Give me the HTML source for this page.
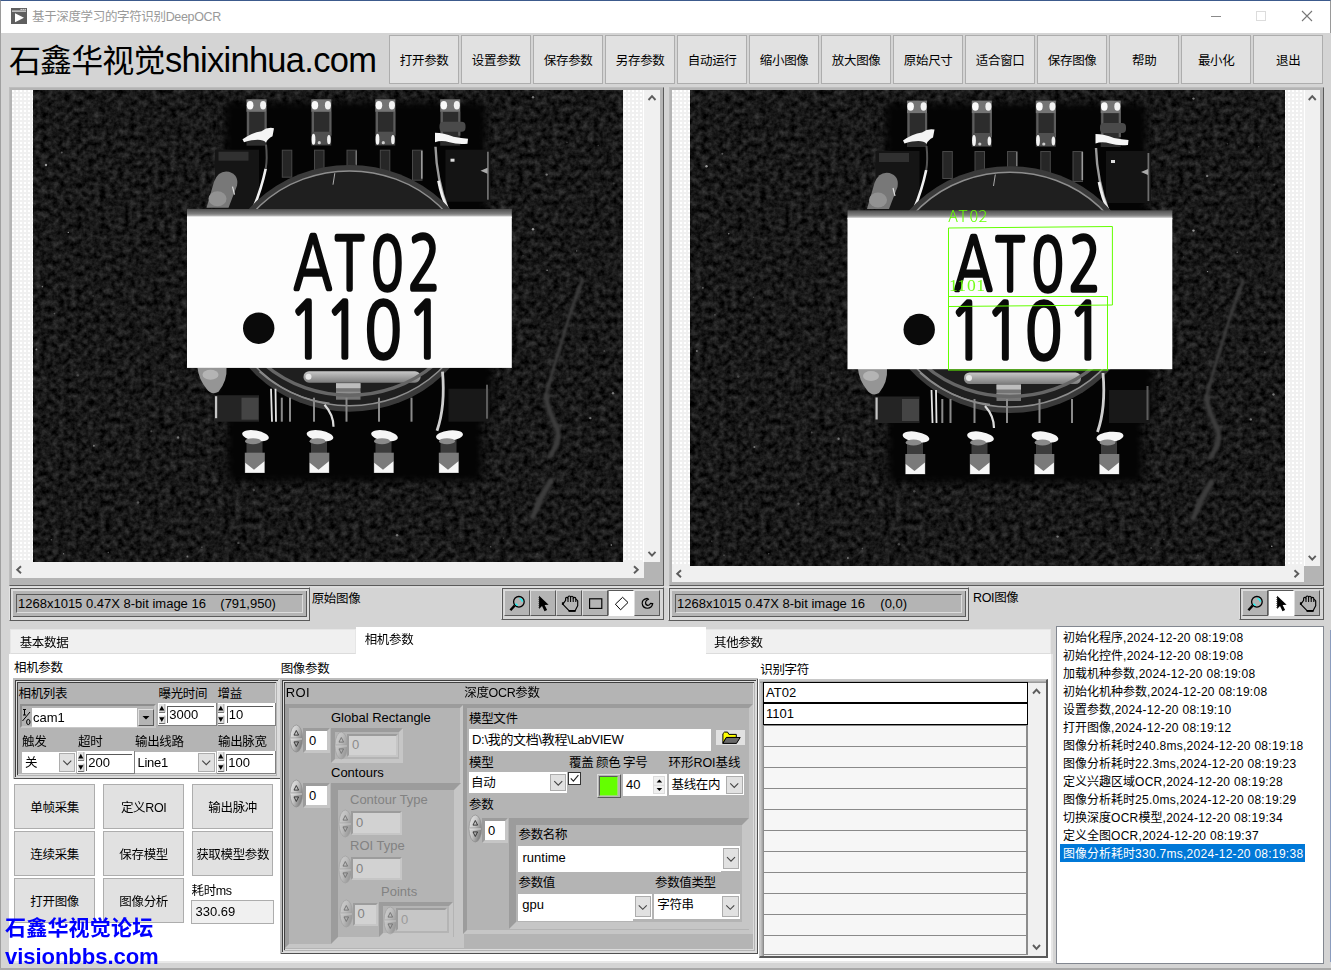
<!DOCTYPE html>
<html lang="zh"><head><meta charset="utf-8"><title>DeepOCR</title>
<style>
*{box-sizing:border-box;margin:0;padding:0}
html,body{width:1331px;height:970px;overflow:hidden;background:#d4d4d4}
body{position:relative;font-family:"Liberation Sans","Noto Sans CJK SC",sans-serif;font-size:12px;color:#000;line-height:1}
.a{position:absolute}
.t{position:absolute;white-space:nowrap;line-height:16px}
svg{position:absolute;display:block;overflow:hidden}
.tb{position:absolute;top:35px;width:70px;height:49px;background:#e1e1e1;border:1px solid #adadad;text-align:center;line-height:50px;font-size:12.5px;letter-spacing:-.35px;text-indent:.35px}
.btn{position:absolute;width:81px;height:45px;background:#e1e1e1;border:1px solid #adadad;text-align:center;line-height:47px;font-size:12.5px;letter-spacing:-.35px;text-indent:.35px;white-space:nowrap}
.dots{background-color:#f0f0f0;background-image:radial-gradient(circle at 1px 1px,#fff 0.9px,rgba(255,255,255,0) 1.3px);background-size:4px 4px}
.sb{background:#f0f0f0}
.cl{background:#b4b4b4}
.w{background:#fff}
.dd{position:absolute;background:#e1e1e1;border:1px solid #adadad}
.g{color:#828282}
.ls{letter-spacing:.28px}
</style></head><body>
<div class="a" style="left:0;top:0;width:1331px;height:33px;background:#fff;border-top:1px solid #3c5a8c;border-left:1px solid #9a9a9a;border-right:1px solid #9a9a9a"></div>
<div class="a" style="left:0;top:33px;width:1px;height:937px;background:#a0a0a0"></div>
<svg style="left:11px;top:8px" width="16" height="16" viewBox="0 0 16 16"><rect width="16" height="16" fill="#5f5f5f"/><rect x="1" y="2.6" width="14" height="1" fill="#fff"/><rect x="9.6" y="0.9" width="1.1" height="1.1" fill="#fff"/><rect x="11.6" y="0.9" width="1.1" height="1.1" fill="#fff"/><rect x="13.6" y="0.9" width="1.1" height="1.1" fill="#fff"/><path d="M4 5.2 L13 9.7 L4 14.2 Z" fill="#fff"/></svg>
<div class="t" style="left:32px;top:8.8px;font-size:12.5px;letter-spacing:-.35px;color:#999">基于深度学习的字符识别DeepOCR</div>
<svg style="left:1200px;top:5px" width="125" height="24" viewBox="1200 5 125 24"><path d="M1211 16.5H1221" stroke="#8a8a8a" stroke-width="1"/><rect x="1256.5" y="11.5" width="9" height="9" fill="none" stroke="#dcdcdc" stroke-width="1"/><path d="M1302 11 L1312 21 M1312 11 L1302 21" stroke="#777" stroke-width="1.1"/></svg>
<div class="t" style="left:9px;top:38.5px;font-size:32px;line-height:42px;letter-spacing:-.9px">石鑫华视觉<span style="font-size:34.5px;letter-spacing:-.72px;margin-left:.5px">shixinhua.com</span></div>
<div class="tb" style="left:389px">打开参数</div>
<div class="tb" style="left:461px">设置参数</div>
<div class="tb" style="left:533px">保存参数</div>
<div class="tb" style="left:605px">另存参数</div>
<div class="tb" style="left:677px">自动运行</div>
<div class="tb" style="left:749px">缩小图像</div>
<div class="tb" style="left:821px">放大图像</div>
<div class="tb" style="left:893px">原始尺寸</div>
<div class="tb" style="left:965px">适合窗口</div>
<div class="tb" style="left:1037px">保存图像</div>
<div class="tb" style="left:1109px">帮助</div>
<div class="tb" style="left:1181px">最小化</div>
<div class="tb" style="left:1253px">退出</div>
<div class="a" style="left:9px;top:87px;width:655px;height:499px;background:#b4b4b4;border-right:1px solid #5a5a5a;border-bottom:1px solid #5a5a5a;border-top:1px solid #bdbdbd;border-left:1px solid #bdbdbd"></div>
<div class="a dots" style="left:12px;top:90px;width:632px;height:472px;"></div>
<div class="a" style="left:643px;top:90px;width:1px;height:472px;background:#fff"></div>
<div class="a sb" style="left:644px;top:90px;width:16px;height:472px;"></div>
<div class="a sb" style="left:12px;top:562px;width:631.5px;height:16px;"></div>
<svg style="left:33px;top:90px" width="590" height="472" viewBox="3.5 1.3 590 472"><defs><filter id="nz1" x="0" y="0" width="100%" height="100%" color-interpolation-filters="sRGB"><feTurbulence type="fractalNoise" baseFrequency="0.17" numOctaves="3" seed="11"/><feColorMatrix type="matrix" values="0.32 0 0 0 -0.065  0.32 0 0 0 -0.065  0.32 0 0 0 -0.065  0 0 0 0 1"/></filter><filter id="bl1" x="-20%" y="-20%" width="140%" height="140%" color-interpolation-filters="sRGB"><feGaussianBlur stdDeviation="3.5"/></filter><filter id="b11" x="-20%" y="-20%" width="140%" height="140%" color-interpolation-filters="sRGB"><feGaussianBlur stdDeviation="0.75"/></filter><filter id="b21" x="-20%" y="-20%" width="140%" height="140%" color-interpolation-filters="sRGB"><feGaussianBlur stdDeviation="1.3"/></filter><linearGradient id="lg1" x1="0" y1="0" x2="0" y2="1"><stop offset="0" stop-color="#4e4e4e"/><stop offset="0.55" stop-color="#808080"/><stop offset="1" stop-color="#ececec"/></linearGradient><linearGradient id="wg1" x1="0" y1="0" x2="0" y2="1"><stop offset="0" stop-color="#c8c8c8"/><stop offset="1" stop-color="#7c7c7c"/></linearGradient></defs><rect x="-5" y="-5" width="606" height="487" fill="#191919"/><rect x="-5" y="-5" width="606" height="487" filter="url(#nz1)"/><g filter="url(#b11)"><circle cx="473.9" cy="449.5" r="0.7" fill="#3c3c3c"/><circle cx="30.9" cy="74.8" r="1.0" fill="#3c3c3c"/><circle cx="517.6" cy="181.6" r="0.7" fill="#999"/><circle cx="148.6" cy="348.8" r="1.2" fill="#777"/><circle cx="108.5" cy="413.8" r="1.2" fill="#5a5a5a"/><circle cx="78.8" cy="463.8" r="0.7" fill="#5a5a5a"/><circle cx="461.1" cy="458.0" r="0.8" fill="#5a5a5a"/><circle cx="172.4" cy="458.6" r="0.8" fill="#5a5a5a"/><circle cx="560.8" cy="329.4" r="1.2" fill="#777"/><circle cx="12.9" cy="197.9" r="0.8" fill="#777"/><circle cx="38.8" cy="143.7" r="0.7" fill="#999"/><circle cx="34.0" cy="465.1" r="0.7" fill="#777"/><circle cx="503.5" cy="8.6" r="1.2" fill="#777"/><circle cx="224.3" cy="401.3" r="1.2" fill="#4a4a4a"/><circle cx="568.8" cy="56.8" r="0.8" fill="#3c3c3c"/><circle cx="64.4" cy="357.0" r="1.0" fill="#777"/><circle cx="21.8" cy="451.1" r="0.7" fill="#5a5a5a"/><circle cx="547.2" cy="162.2" r="0.7" fill="#777"/><circle cx="48.3" cy="286.5" r="1.2" fill="#4a4a4a"/><circle cx="141.5" cy="283.3" r="1.0" fill="#3c3c3c"/><circle cx="583.5" cy="304.5" r="1.2" fill="#777"/><circle cx="499.7" cy="62.3" r="0.8" fill="#3c3c3c"/><circle cx="63.6" cy="207.3" r="0.8" fill="#4a4a4a"/><circle cx="503.5" cy="140.6" r="1.2" fill="#999"/><circle cx="507.9" cy="465.6" r="1.2" fill="#3c3c3c"/><circle cx="537.5" cy="53.7" r="0.8" fill="#3c3c3c"/><circle cx="517.2" cy="85.9" r="1.2" fill="#777"/><circle cx="157.9" cy="467.9" r="1.0" fill="#777"/><circle cx="6.9" cy="260.9" r="1.0" fill="#777"/><circle cx="493.6" cy="167.0" r="0.8" fill="#3c3c3c"/><circle cx="581.8" cy="456.3" r="0.8" fill="#999"/><circle cx="584.2" cy="94.8" r="1.0" fill="#3c3c3c"/><circle cx="367.6" cy="446.6" r="1.2" fill="#777"/><circle cx="16.5" cy="76.3" r="1.2" fill="#999"/><circle cx="24.9" cy="224.9" r="0.8" fill="#5a5a5a"/><circle cx="32.3" cy="63.7" r="1.0" fill="#5a5a5a"/><circle cx="121.8" cy="342.5" r="1.0" fill="#4a4a4a"/><circle cx="208.9" cy="454.2" r="1.2" fill="#4a4a4a"/><circle cx="574.8" cy="262.3" r="1.0" fill="#4a4a4a"/></g><path d="M196 14 H456 V122 H462 V330 H452 V392 H198 V330 H186 V122 H196 Z" fill="#040404" filter="url(#bl1)"/><g filter="url(#b21)" fill="none" stroke="#3d3d3d" stroke-linecap="round" stroke-linejoin="round"><path d="M552.8 191 Q540 225 533 250 Q522 285 516.5 306" stroke-width="3.2"/><path d="M516.5 306 Q518 322 528 340 Q531 352 521.5 366" stroke-width="5"/><path d="M521.5 392 L512 408 L503.3 428" stroke-width="5.5"/></g><g filter="url(#b11)"><rect x="185.5" y="61" width="44" height="60" fill="#151515"/><rect x="189" y="63" width="30" height="9" fill="#303030"/><rect x="416" y="61" width="45" height="52" fill="#141414"/><rect x="457.5" y="63" width="1.8" height="48" fill="#6e6e6e"/><rect x="421" y="70" width="4" height="3" fill="#ddd"/><path d="M451 82 L458 79 V85 Z" fill="#aaa"/><rect x="252.8" y="61.5" width="9.5" height="27" fill="#262626" stroke="#484848" stroke-width="1"/><rect x="285" y="61.5" width="9.5" height="22" fill="#262626" stroke="#484848" stroke-width="1"/><rect x="317.5" y="61.5" width="9.5" height="20" fill="#262626" stroke="#484848" stroke-width="1"/><rect x="350.8" y="61.5" width="9.5" height="22" fill="#262626" stroke="#484848" stroke-width="1"/><rect x="383" y="61.5" width="9.5" height="30" fill="#262626" stroke="#484848" stroke-width="1"/><rect x="391.5" y="62" width="1.6" height="28" fill="#9a9a9a"/><rect x="326" y="62" width="1.4" height="14" fill="#777"/><rect x="217" y="11" width="20" height="46" fill="#2c2c2c"/><rect x="217.5" y="23" width="2.2" height="24" fill="#5c5c5c"/><rect x="235" y="23" width="2.2" height="24" fill="#5c5c5c"/><rect x="217" y="10.6" width="20" height="12.5" fill="#747474"/><ellipse cx="220.6" cy="16.5" rx="3.3" ry="4.2" fill="#fafafa"/><ellipse cx="233.6" cy="16.5" rx="3" ry="4.2" fill="#f2f2f2"/><rect x="281.8" y="11" width="20" height="46" fill="#2c2c2c"/><rect x="282.3" y="23" width="2.2" height="24" fill="#5c5c5c"/><rect x="299.8" y="23" width="2.2" height="24" fill="#5c5c5c"/><rect x="281.8" y="10.6" width="20" height="12.5" fill="#747474"/><ellipse cx="285.4" cy="16.5" rx="3.3" ry="4.2" fill="#fafafa"/><ellipse cx="298.4" cy="16.5" rx="3" ry="4.2" fill="#f2f2f2"/><rect x="282.3" y="43" width="19" height="13" fill="#505050"/><ellipse cx="284" cy="50.5" rx="1.9" ry="5.5" fill="#f4f4f4"/><ellipse cx="299.4" cy="51" rx="1.8" ry="4.6" fill="#f0f0f0"/><circle cx="289.8" cy="54" r="1.6" fill="#ccc"/><rect x="345.8" y="11" width="20" height="46" fill="#2c2c2c"/><rect x="346.3" y="23" width="2.2" height="24" fill="#5c5c5c"/><rect x="363.8" y="23" width="2.2" height="24" fill="#5c5c5c"/><rect x="345.8" y="10.6" width="20" height="12.5" fill="#747474"/><ellipse cx="349.4" cy="16.5" rx="3.3" ry="4.2" fill="#fafafa"/><ellipse cx="362.4" cy="16.5" rx="3" ry="4.2" fill="#f2f2f2"/><rect x="346.3" y="43" width="19" height="13" fill="#505050"/><ellipse cx="348" cy="50.5" rx="1.9" ry="5.5" fill="#f4f4f4"/><ellipse cx="363.4" cy="51" rx="1.8" ry="4.6" fill="#f0f0f0"/><circle cx="353.8" cy="54" r="1.6" fill="#ccc"/><rect x="410.7" y="11" width="20" height="46" fill="#2c2c2c"/><rect x="411.2" y="23" width="2.2" height="24" fill="#5c5c5c"/><rect x="428.7" y="23" width="2.2" height="24" fill="#5c5c5c"/><rect x="410.7" y="10.6" width="20" height="12.5" fill="#747474"/><ellipse cx="414.3" cy="16.5" rx="3.3" ry="4.2" fill="#fafafa"/><ellipse cx="427.3" cy="16.5" rx="3" ry="4.2" fill="#f2f2f2"/><path d="M213 50.5 Q222 44 232 42.5 Q238 38 244.5 39.5 L243 47.5 Q238 50 236.5 54 Q232 48.5 214.5 53.5 Z" fill="#f4f4f4"/><path d="M236.2 80 Q232 100 224 119" fill="none" stroke="#f0f0f0" stroke-width="2.6"/><path d="M236.5 56 Q238 70 236.2 80" fill="none" stroke="#555" stroke-width="2"/><rect x="410" y="33" width="26" height="10" rx="4" fill="#4a4a4a"/><path d="M405.5 44 Q414 44 424 48 Q432 49.5 438.5 50 L438 55 Q428 56 420 53.5 Q412 51 405.5 53.5 Z" fill="#f6f6f6"/><path d="M406 58 Q407 90 418.5 121" fill="none" stroke="#9a9a9a" stroke-width="2.4"/><path d="M409 92 Q412 108 418.5 121" fill="none" stroke="#eee" stroke-width="2.8"/><path d="M177 119 L184.5 93 Q189 81 199.5 83 Q209.5 86 207.5 97 L199 119 Z" fill="#787878"/><ellipse cx="188" cy="110" rx="9" ry="7.5" fill="#929292"/><path d="M203 98 L205 106" stroke="#ddd" stroke-width="1.2"/><ellipse cx="320" cy="199.6" rx="131.5" ry="123.4" fill="#3a3a3a"/><ellipse cx="320" cy="199.6" rx="126" ry="117.4" fill="#1f1f1f" stroke="#8e8e8e" stroke-width="1.5"/><path d="M305.3 84.5 L303.5 96" stroke="#bbb" stroke-width="0.9"/><path d="M168 279 H197 Q198 292 189 303 Q182 307 177 300 Q169 290 168 279 Z" fill="#959595"/><ellipse cx="181" cy="286" rx="8" ry="5" fill="#b4b4b4"/><rect x="274" y="282.5" width="117" height="11.5" rx="5.5" fill="url(#wg1)"/><ellipse cx="279" cy="288" rx="3" ry="3" fill="#e8e8e8"/><rect x="306.5" y="294.5" width="24.5" height="16.5" fill="#747474"/><rect x="306.5" y="294.5" width="24.5" height="5" fill="#bdbdbd"/><rect x="306.5" y="303" width="24.5" height="2" fill="#909090"/><path d="M194.5 199.6 A126 117.4 0 0 0 445.5 199.6" fill="none" stroke="#666" stroke-width="3.4"/><path d="M230 283 A126 116 0 0 0 300 314.5" fill="none" stroke="#8a8a8a" stroke-width="1.4"/><rect x="184.5" y="306.5" width="45" height="26.5" fill="#242424"/><rect x="212" y="309" width="17" height="22" fill="#444"/><rect x="185.5" y="307.5" width="2.2" height="22" fill="#c4c4c4"/><rect x="419" y="300" width="41" height="33" fill="#181818"/><rect x="456.5" y="296" width="2" height="34" fill="#5c5c5c"/><rect x="251.3" y="309" width="2" height="24" fill="#8a8a8a"/><rect x="259.5" y="309" width="2" height="24" fill="#8a8a8a"/><rect x="283.5" y="309" width="2" height="24" fill="#8a8a8a"/><rect x="316" y="309" width="2" height="24" fill="#8a8a8a"/><rect x="348.5" y="309" width="2" height="24" fill="#8a8a8a"/><rect x="381" y="309" width="2" height="24" fill="#8a8a8a"/><path d="M241.5 300 L242.5 333 M246 300 L246.5 333" fill="none" stroke="#e4e4e4" stroke-width="1.8"/><path d="M295 316 Q304 326 304 338" fill="none" stroke="#ddd" stroke-width="2.2"/><path d="M413 283 Q416 318 407.5 342" fill="none" stroke="#cfcfcf" stroke-width="2.8"/><rect x="217" y="350" width="16" height="22" fill="#3c3c3c"/><ellipse cx="226" cy="347" rx="13.5" ry="5.2" fill="#f6f6f6" transform="rotate(10 226 347)"/><ellipse cx="223.5" cy="352.5" rx="8" ry="3" fill="#8a8a8a"/><rect x="215.3" y="364" width="20" height="20.3" fill="#7a7a7a"/><path d="M215.7 384 V374 L224.5 381 L234.9 372.5 V384 Z" fill="#f6f6f6"/><rect x="281.5" y="350" width="16" height="22" fill="#3c3c3c"/><ellipse cx="290.5" cy="347" rx="13.5" ry="5.2" fill="#f6f6f6" transform="rotate(10 290.5 347)"/><ellipse cx="288" cy="352.5" rx="8" ry="3" fill="#8a8a8a"/><rect x="279.8" y="364" width="20" height="20.3" fill="#7a7a7a"/><path d="M280.2 384 V374 L289 381 L299.4 372.5 V384 Z" fill="#f6f6f6"/><rect x="346" y="350" width="16" height="22" fill="#3c3c3c"/><ellipse cx="355" cy="347" rx="13.5" ry="5.2" fill="#f6f6f6" transform="rotate(10 355 347)"/><ellipse cx="352.5" cy="352.5" rx="8" ry="3" fill="#8a8a8a"/><rect x="344.3" y="364" width="20" height="20.3" fill="#7a7a7a"/><path d="M344.7 384 V374 L353.5 381 L363.9 372.5 V384 Z" fill="#f6f6f6"/><rect x="411" y="350" width="16" height="22" fill="#3c3c3c"/><ellipse cx="420" cy="347" rx="13.5" ry="5.2" fill="#f6f6f6" transform="rotate(-6 420 347)"/><ellipse cx="417.5" cy="352.5" rx="8" ry="3" fill="#8a8a8a"/><rect x="409.3" y="364" width="20" height="20.3" fill="#7a7a7a"/><path d="M409.7 384 V374 L418.5 381 L428.9 372.5 V384 Z" fill="#f6f6f6"/><rect x="157.5" y="120.3" width="324.8" height="9" fill="url(#lg1)"/><rect x="157.5" y="127.8" width="324.8" height="151.4" fill="#fdfdfd"/><circle cx="229.2" cy="239.5" r="15.7" fill="#0a0a0a"/><text transform="translate(263.7 201.4) scale(0.72 1)" x="0 57.6 108.1 159.4" font-family="NanumGothic, Liberation Sans, sans-serif" font-size="74.5" fill="#0a0a0a" stroke="#0a0a0a" stroke-width="3.4" stroke-linejoin="round">AT02</text><text transform="translate(258.3 269) scale(0.8 1)" x="0 45.6 95.9 148.6" font-family="NanumGothic, Liberation Sans, sans-serif" font-size="77" fill="#0a0a0a" stroke="#0a0a0a" stroke-width="3.4" stroke-linejoin="round">1101</text></g></svg>
<svg style="left:9px;top:87px" width="655" height="499" viewBox="9 87 655 499"><path d="M648.5 100 L652 96.2 L655.5 100" fill="none" stroke="#5c5c5c" stroke-width="1.9"/><path d="M648.5 551.8 L652 555.6 L655.5 551.8" fill="none" stroke="#5c5c5c" stroke-width="1.9"/><path d="M21 566.2 L17.2 569.7 L21 573.2" fill="none" stroke="#5c5c5c" stroke-width="1.9"/><path d="M634 566.2 L637.8 569.7 L634 573.2" fill="none" stroke="#5c5c5c" stroke-width="1.9"/></svg>
<div class="a" style="left:669px;top:87px;width:655px;height:499px;background:#b4b4b4;border-right:1px solid #5a5a5a;border-bottom:1px solid #5a5a5a;border-top:1px solid #bdbdbd;border-left:1px solid #bdbdbd"></div>
<div class="a dots" style="left:672px;top:90px;width:632.5px;height:476px;"></div>
<div class="a" style="left:1303.5px;top:90px;width:1px;height:476px;background:#fff"></div>
<div class="a sb" style="left:1304.5px;top:90px;width:15.5px;height:476px;"></div>
<div class="a sb" style="left:672px;top:566px;width:632px;height:16px;"></div>
<svg style="left:690px;top:90px" width="595" height="476" viewBox="0 0 595 476"><defs><filter id="nz2" x="0" y="0" width="100%" height="100%" color-interpolation-filters="sRGB"><feTurbulence type="fractalNoise" baseFrequency="0.17" numOctaves="3" seed="11"/><feColorMatrix type="matrix" values="0.32 0 0 0 -0.065  0.32 0 0 0 -0.065  0.32 0 0 0 -0.065  0 0 0 0 1"/></filter><filter id="bl2" x="-20%" y="-20%" width="140%" height="140%" color-interpolation-filters="sRGB"><feGaussianBlur stdDeviation="3.5"/></filter><filter id="b12" x="-20%" y="-20%" width="140%" height="140%" color-interpolation-filters="sRGB"><feGaussianBlur stdDeviation="0.75"/></filter><filter id="b22" x="-20%" y="-20%" width="140%" height="140%" color-interpolation-filters="sRGB"><feGaussianBlur stdDeviation="1.3"/></filter><linearGradient id="lg2" x1="0" y1="0" x2="0" y2="1"><stop offset="0" stop-color="#4e4e4e"/><stop offset="0.55" stop-color="#808080"/><stop offset="1" stop-color="#ececec"/></linearGradient><linearGradient id="wg2" x1="0" y1="0" x2="0" y2="1"><stop offset="0" stop-color="#c8c8c8"/><stop offset="1" stop-color="#7c7c7c"/></linearGradient></defs><rect x="-5" y="-5" width="606" height="487" fill="#191919"/><rect x="-5" y="-5" width="606" height="487" filter="url(#nz2)"/><g filter="url(#b12)"><circle cx="473.9" cy="449.5" r="0.7" fill="#3c3c3c"/><circle cx="30.9" cy="74.8" r="1.0" fill="#3c3c3c"/><circle cx="517.6" cy="181.6" r="0.7" fill="#999"/><circle cx="148.6" cy="348.8" r="1.2" fill="#777"/><circle cx="108.5" cy="413.8" r="1.2" fill="#5a5a5a"/><circle cx="78.8" cy="463.8" r="0.7" fill="#5a5a5a"/><circle cx="461.1" cy="458.0" r="0.8" fill="#5a5a5a"/><circle cx="172.4" cy="458.6" r="0.8" fill="#5a5a5a"/><circle cx="560.8" cy="329.4" r="1.2" fill="#777"/><circle cx="12.9" cy="197.9" r="0.8" fill="#777"/><circle cx="38.8" cy="143.7" r="0.7" fill="#999"/><circle cx="34.0" cy="465.1" r="0.7" fill="#777"/><circle cx="503.5" cy="8.6" r="1.2" fill="#777"/><circle cx="224.3" cy="401.3" r="1.2" fill="#4a4a4a"/><circle cx="568.8" cy="56.8" r="0.8" fill="#3c3c3c"/><circle cx="64.4" cy="357.0" r="1.0" fill="#777"/><circle cx="21.8" cy="451.1" r="0.7" fill="#5a5a5a"/><circle cx="547.2" cy="162.2" r="0.7" fill="#777"/><circle cx="48.3" cy="286.5" r="1.2" fill="#4a4a4a"/><circle cx="141.5" cy="283.3" r="1.0" fill="#3c3c3c"/><circle cx="583.5" cy="304.5" r="1.2" fill="#777"/><circle cx="499.7" cy="62.3" r="0.8" fill="#3c3c3c"/><circle cx="63.6" cy="207.3" r="0.8" fill="#4a4a4a"/><circle cx="503.5" cy="140.6" r="1.2" fill="#999"/><circle cx="507.9" cy="465.6" r="1.2" fill="#3c3c3c"/><circle cx="537.5" cy="53.7" r="0.8" fill="#3c3c3c"/><circle cx="517.2" cy="85.9" r="1.2" fill="#777"/><circle cx="157.9" cy="467.9" r="1.0" fill="#777"/><circle cx="6.9" cy="260.9" r="1.0" fill="#777"/><circle cx="493.6" cy="167.0" r="0.8" fill="#3c3c3c"/><circle cx="581.8" cy="456.3" r="0.8" fill="#999"/><circle cx="584.2" cy="94.8" r="1.0" fill="#3c3c3c"/><circle cx="367.6" cy="446.6" r="1.2" fill="#777"/><circle cx="16.5" cy="76.3" r="1.2" fill="#999"/><circle cx="24.9" cy="224.9" r="0.8" fill="#5a5a5a"/><circle cx="32.3" cy="63.7" r="1.0" fill="#5a5a5a"/><circle cx="121.8" cy="342.5" r="1.0" fill="#4a4a4a"/><circle cx="208.9" cy="454.2" r="1.2" fill="#4a4a4a"/><circle cx="574.8" cy="262.3" r="1.0" fill="#4a4a4a"/></g><path d="M196 14 H456 V122 H462 V330 H452 V392 H198 V330 H186 V122 H196 Z" fill="#040404" filter="url(#bl2)"/><g filter="url(#b22)" fill="none" stroke="#3d3d3d" stroke-linecap="round" stroke-linejoin="round"><path d="M552.8 191 Q540 225 533 250 Q522 285 516.5 306" stroke-width="3.2"/><path d="M516.5 306 Q518 322 528 340 Q531 352 521.5 366" stroke-width="5"/><path d="M521.5 392 L512 408 L503.3 428" stroke-width="5.5"/></g><g filter="url(#b12)"><rect x="185.5" y="61" width="44" height="60" fill="#151515"/><rect x="189" y="63" width="30" height="9" fill="#303030"/><rect x="416" y="61" width="45" height="52" fill="#141414"/><rect x="457.5" y="63" width="1.8" height="48" fill="#6e6e6e"/><rect x="421" y="70" width="4" height="3" fill="#ddd"/><path d="M451 82 L458 79 V85 Z" fill="#aaa"/><rect x="252.8" y="61.5" width="9.5" height="27" fill="#262626" stroke="#484848" stroke-width="1"/><rect x="285" y="61.5" width="9.5" height="22" fill="#262626" stroke="#484848" stroke-width="1"/><rect x="317.5" y="61.5" width="9.5" height="20" fill="#262626" stroke="#484848" stroke-width="1"/><rect x="350.8" y="61.5" width="9.5" height="22" fill="#262626" stroke="#484848" stroke-width="1"/><rect x="383" y="61.5" width="9.5" height="30" fill="#262626" stroke="#484848" stroke-width="1"/><rect x="391.5" y="62" width="1.6" height="28" fill="#9a9a9a"/><rect x="326" y="62" width="1.4" height="14" fill="#777"/><rect x="217" y="11" width="20" height="46" fill="#2c2c2c"/><rect x="217.5" y="23" width="2.2" height="24" fill="#5c5c5c"/><rect x="235" y="23" width="2.2" height="24" fill="#5c5c5c"/><rect x="217" y="10.6" width="20" height="12.5" fill="#747474"/><ellipse cx="220.6" cy="16.5" rx="3.3" ry="4.2" fill="#fafafa"/><ellipse cx="233.6" cy="16.5" rx="3" ry="4.2" fill="#f2f2f2"/><rect x="281.8" y="11" width="20" height="46" fill="#2c2c2c"/><rect x="282.3" y="23" width="2.2" height="24" fill="#5c5c5c"/><rect x="299.8" y="23" width="2.2" height="24" fill="#5c5c5c"/><rect x="281.8" y="10.6" width="20" height="12.5" fill="#747474"/><ellipse cx="285.4" cy="16.5" rx="3.3" ry="4.2" fill="#fafafa"/><ellipse cx="298.4" cy="16.5" rx="3" ry="4.2" fill="#f2f2f2"/><rect x="282.3" y="43" width="19" height="13" fill="#505050"/><ellipse cx="284" cy="50.5" rx="1.9" ry="5.5" fill="#f4f4f4"/><ellipse cx="299.4" cy="51" rx="1.8" ry="4.6" fill="#f0f0f0"/><circle cx="289.8" cy="54" r="1.6" fill="#ccc"/><rect x="345.8" y="11" width="20" height="46" fill="#2c2c2c"/><rect x="346.3" y="23" width="2.2" height="24" fill="#5c5c5c"/><rect x="363.8" y="23" width="2.2" height="24" fill="#5c5c5c"/><rect x="345.8" y="10.6" width="20" height="12.5" fill="#747474"/><ellipse cx="349.4" cy="16.5" rx="3.3" ry="4.2" fill="#fafafa"/><ellipse cx="362.4" cy="16.5" rx="3" ry="4.2" fill="#f2f2f2"/><rect x="346.3" y="43" width="19" height="13" fill="#505050"/><ellipse cx="348" cy="50.5" rx="1.9" ry="5.5" fill="#f4f4f4"/><ellipse cx="363.4" cy="51" rx="1.8" ry="4.6" fill="#f0f0f0"/><circle cx="353.8" cy="54" r="1.6" fill="#ccc"/><rect x="410.7" y="11" width="20" height="46" fill="#2c2c2c"/><rect x="411.2" y="23" width="2.2" height="24" fill="#5c5c5c"/><rect x="428.7" y="23" width="2.2" height="24" fill="#5c5c5c"/><rect x="410.7" y="10.6" width="20" height="12.5" fill="#747474"/><ellipse cx="414.3" cy="16.5" rx="3.3" ry="4.2" fill="#fafafa"/><ellipse cx="427.3" cy="16.5" rx="3" ry="4.2" fill="#f2f2f2"/><path d="M213 50.5 Q222 44 232 42.5 Q238 38 244.5 39.5 L243 47.5 Q238 50 236.5 54 Q232 48.5 214.5 53.5 Z" fill="#f4f4f4"/><path d="M236.2 80 Q232 100 224 119" fill="none" stroke="#f0f0f0" stroke-width="2.6"/><path d="M236.5 56 Q238 70 236.2 80" fill="none" stroke="#555" stroke-width="2"/><rect x="410" y="33" width="26" height="10" rx="4" fill="#4a4a4a"/><path d="M405.5 44 Q414 44 424 48 Q432 49.5 438.5 50 L438 55 Q428 56 420 53.5 Q412 51 405.5 53.5 Z" fill="#f6f6f6"/><path d="M406 58 Q407 90 418.5 121" fill="none" stroke="#9a9a9a" stroke-width="2.4"/><path d="M409 92 Q412 108 418.5 121" fill="none" stroke="#eee" stroke-width="2.8"/><path d="M177 119 L184.5 93 Q189 81 199.5 83 Q209.5 86 207.5 97 L199 119 Z" fill="#787878"/><ellipse cx="188" cy="110" rx="9" ry="7.5" fill="#929292"/><path d="M203 98 L205 106" stroke="#ddd" stroke-width="1.2"/><ellipse cx="320" cy="199.6" rx="131.5" ry="123.4" fill="#3a3a3a"/><ellipse cx="320" cy="199.6" rx="126" ry="117.4" fill="#1f1f1f" stroke="#8e8e8e" stroke-width="1.5"/><path d="M305.3 84.5 L303.5 96" stroke="#bbb" stroke-width="0.9"/><path d="M168 279 H197 Q198 292 189 303 Q182 307 177 300 Q169 290 168 279 Z" fill="#959595"/><ellipse cx="181" cy="286" rx="8" ry="5" fill="#b4b4b4"/><rect x="274" y="282.5" width="117" height="11.5" rx="5.5" fill="url(#wg2)"/><ellipse cx="279" cy="288" rx="3" ry="3" fill="#e8e8e8"/><rect x="306.5" y="294.5" width="24.5" height="16.5" fill="#747474"/><rect x="306.5" y="294.5" width="24.5" height="5" fill="#bdbdbd"/><rect x="306.5" y="303" width="24.5" height="2" fill="#909090"/><path d="M194.5 199.6 A126 117.4 0 0 0 445.5 199.6" fill="none" stroke="#666" stroke-width="3.4"/><path d="M230 283 A126 116 0 0 0 300 314.5" fill="none" stroke="#8a8a8a" stroke-width="1.4"/><rect x="184.5" y="306.5" width="45" height="26.5" fill="#242424"/><rect x="212" y="309" width="17" height="22" fill="#444"/><rect x="185.5" y="307.5" width="2.2" height="22" fill="#c4c4c4"/><rect x="419" y="300" width="41" height="33" fill="#181818"/><rect x="456.5" y="296" width="2" height="34" fill="#5c5c5c"/><rect x="251.3" y="309" width="2" height="24" fill="#8a8a8a"/><rect x="259.5" y="309" width="2" height="24" fill="#8a8a8a"/><rect x="283.5" y="309" width="2" height="24" fill="#8a8a8a"/><rect x="316" y="309" width="2" height="24" fill="#8a8a8a"/><rect x="348.5" y="309" width="2" height="24" fill="#8a8a8a"/><rect x="381" y="309" width="2" height="24" fill="#8a8a8a"/><path d="M241.5 300 L242.5 333 M246 300 L246.5 333" fill="none" stroke="#e4e4e4" stroke-width="1.8"/><path d="M295 316 Q304 326 304 338" fill="none" stroke="#ddd" stroke-width="2.2"/><path d="M413 283 Q416 318 407.5 342" fill="none" stroke="#cfcfcf" stroke-width="2.8"/><rect x="217" y="350" width="16" height="22" fill="#3c3c3c"/><ellipse cx="226" cy="347" rx="13.5" ry="5.2" fill="#f6f6f6" transform="rotate(10 226 347)"/><ellipse cx="223.5" cy="352.5" rx="8" ry="3" fill="#8a8a8a"/><rect x="215.3" y="364" width="20" height="20.3" fill="#7a7a7a"/><path d="M215.7 384 V374 L224.5 381 L234.9 372.5 V384 Z" fill="#f6f6f6"/><rect x="281.5" y="350" width="16" height="22" fill="#3c3c3c"/><ellipse cx="290.5" cy="347" rx="13.5" ry="5.2" fill="#f6f6f6" transform="rotate(10 290.5 347)"/><ellipse cx="288" cy="352.5" rx="8" ry="3" fill="#8a8a8a"/><rect x="279.8" y="364" width="20" height="20.3" fill="#7a7a7a"/><path d="M280.2 384 V374 L289 381 L299.4 372.5 V384 Z" fill="#f6f6f6"/><rect x="346" y="350" width="16" height="22" fill="#3c3c3c"/><ellipse cx="355" cy="347" rx="13.5" ry="5.2" fill="#f6f6f6" transform="rotate(10 355 347)"/><ellipse cx="352.5" cy="352.5" rx="8" ry="3" fill="#8a8a8a"/><rect x="344.3" y="364" width="20" height="20.3" fill="#7a7a7a"/><path d="M344.7 384 V374 L353.5 381 L363.9 372.5 V384 Z" fill="#f6f6f6"/><rect x="411" y="350" width="16" height="22" fill="#3c3c3c"/><ellipse cx="420" cy="347" rx="13.5" ry="5.2" fill="#f6f6f6" transform="rotate(-6 420 347)"/><ellipse cx="417.5" cy="352.5" rx="8" ry="3" fill="#8a8a8a"/><rect x="409.3" y="364" width="20" height="20.3" fill="#7a7a7a"/><path d="M409.7 384 V374 L418.5 381 L428.9 372.5 V384 Z" fill="#f6f6f6"/><rect x="157.5" y="120.3" width="324.8" height="9" fill="url(#lg2)"/><rect x="157.5" y="127.8" width="324.8" height="151.4" fill="#fdfdfd"/><circle cx="229.2" cy="239.5" r="15.7" fill="#0a0a0a"/><text transform="translate(263.7 201.4) scale(0.72 1)" x="0 57.6 108.1 159.4" font-family="NanumGothic, Liberation Sans, sans-serif" font-size="74.5" fill="#0a0a0a" stroke="#0a0a0a" stroke-width="3.4" stroke-linejoin="round">AT02</text><text transform="translate(258.3 269) scale(0.8 1)" x="0 45.6 95.9 148.6" font-family="NanumGothic, Liberation Sans, sans-serif" font-size="77" fill="#0a0a0a" stroke="#0a0a0a" stroke-width="3.4" stroke-linejoin="round">1101</text></g><g fill="none" stroke="#64ff00" stroke-width="1"><path d="M258.5 138 L422.4 136.5 L422.4 215 L258.5 216.5 Z"/><rect x="258.5" y="206.5" width="159" height="73.5"/></g><text x="258.3 268.2 279.6 288.4" y="132" font-family="Noto Sans CJK SC, Liberation Sans, sans-serif" font-weight="300" font-size="16.4" fill="#64ff00">AT02</text><text x="259 267.2 277 286.2" y="201.3" font-family="Liberation Serif, serif" font-size="17.6" fill="#64ff00" fill-opacity="0.9">1101</text></svg>
<svg style="left:669px;top:87px" width="655" height="499" viewBox="669 87 655 499"><path d="M1308.75 100 L1312.25 96.2 L1315.75 100" fill="none" stroke="#5c5c5c" stroke-width="1.9"/><path d="M1308.75 555.8 L1312.25 559.6 L1315.75 555.8" fill="none" stroke="#5c5c5c" stroke-width="1.9"/><path d="M681 570.2 L677.2 573.7 L681 577.2" fill="none" stroke="#5c5c5c" stroke-width="1.9"/><path d="M1294.5 570.2 L1298.3 573.7 L1294.5 577.2" fill="none" stroke="#5c5c5c" stroke-width="1.9"/></svg>
<div class="a" style="left:9px;top:586px;width:1315px;height:1.5px;background:#dcdcdc"></div>
<div class="a" style="left:9px;top:587px;width:301px;height:34px;background:#dcdcdc;border-top:1px solid #e2e2e2;border-left:1px solid #e2e2e2;border-right:1px solid #5a5a5a;border-bottom:1px solid #5a5a5a"></div>
<div class="a" style="left:10px;top:588px;width:299px;height:32px;border-top:1px solid #5a5a5a;border-left:1px solid #5a5a5a"></div>
<div class="a" style="left:13px;top:591px;width:294px;height:26px;background:#b4b4b4;border-right:1px solid #5a5a5a;border-bottom:1px solid #5a5a5a"></div>
<div class="a" style="left:16px;top:594px;width:287px;height:19px;border:1px solid #5a5a5a;border-right-color:#dcdcdc;border-bottom-color:#dcdcdc;background:#b4b4b4"></div>
<div class="t" style="left:18px;top:595.5px;font-size:13px;">1268x1015 0.47X 8-bit image 16</div>
<div class="t" style="left:220.3px;top:595.5px;font-size:13px;">(791,950)</div>
<div class="a" style="left:668px;top:587px;width:301px;height:34px;background:#dcdcdc;border-top:1px solid #e2e2e2;border-left:1px solid #e2e2e2;border-right:1px solid #5a5a5a;border-bottom:1px solid #5a5a5a"></div>
<div class="a" style="left:669px;top:588px;width:299px;height:32px;border-top:1px solid #5a5a5a;border-left:1px solid #5a5a5a"></div>
<div class="a" style="left:672px;top:591px;width:294px;height:26px;background:#b4b4b4;border-right:1px solid #5a5a5a;border-bottom:1px solid #5a5a5a"></div>
<div class="a" style="left:675px;top:594px;width:287px;height:19px;border:1px solid #5a5a5a;border-right-color:#dcdcdc;border-bottom-color:#dcdcdc;background:#b4b4b4"></div>
<div class="t" style="left:677px;top:595.5px;font-size:13px;">1268x1015 0.47X 8-bit image 16</div>
<div class="t" style="left:880.3px;top:595.5px;font-size:13px;">(0,0)</div>
<div class="t" style="left:311.7px;top:590.5px;font-size:12.5px;letter-spacing:-.35px;">原始图像</div>
<div class="t" style="left:973px;top:589.8px;font-size:12.5px;letter-spacing:-.35px;">ROI图像</div>
<div class="a" style="left:501px;top:587px;width:163px;height:33px;background:#d6d6d6;border-top:1px solid #dedede;border-left:1px solid #dedede;border-right:1px solid #5a5a5a;border-bottom:1px solid #5a5a5a"></div>
<div class="a" style="left:502px;top:588px;width:161px;height:31px;border-top:1px solid #5a5a5a;border-left:1px solid #5a5a5a"></div>
<div class="a" style="left:504px;top:590px;width:26px;height:26px;background:#b4b4b4;border-left:1px solid #dcdcdc;border-top:1px solid #dcdcdc;border-right:1px solid #5a5a5a;border-bottom:1px solid #5a5a5a"></div>
<svg style="left:504px;top:590px" width="26" height="26" viewBox="0 0 26 26"><circle cx="14.9" cy="11.8" r="5.3" fill="none" stroke="#000" stroke-width="1.3"/><path d="M10.6 15.6 L6.4 20.2" stroke="#000" stroke-width="2.4" stroke-linecap="butt"/><path d="M15.4 8.5 A3.7 3.7 0 0 1 18.4 11.8" fill="none" stroke="#00ffff" stroke-width="1.1"/><path d="M11.6 13.6 A3.9 3.9 0 0 0 13.6 15.4" fill="none" stroke="#00ffff" stroke-width="1.3"/></svg>
<div class="a" style="left:530px;top:590px;width:26px;height:26px;background:#b4b4b4;border-left:1px solid #dcdcdc;border-top:1px solid #dcdcdc;border-right:1px solid #5a5a5a;border-bottom:1px solid #5a5a5a"></div>
<svg style="left:530px;top:590px" width="26" height="26" viewBox="0 0 26 26"><path d="M9.1 5.8 L9.1 19 L12 16 L14.5 21.2 L17.1 20 L14.6 15 L18.6 14.8 Z" fill="#000"/><path d="M8.6 7 V18.4" stroke="#6a6a6a" stroke-width="0.8" stroke-dasharray="1 1"/></svg>
<div class="a" style="left:556px;top:590px;width:26px;height:26px;background:#b4b4b4;border-left:1px solid #dcdcdc;border-top:1px solid #dcdcdc;border-right:1px solid #5a5a5a;border-bottom:1px solid #5a5a5a"></div>
<svg style="left:556px;top:590px" width="26" height="26" viewBox="0 0 26 26"><path d="M7.2 13.6 L9.6 10.4 V8.6 Q9.6 7.4 10.8 7.4 Q12 7.4 12 8.6 V7.2 Q12 6 13.3 6 Q14.6 6 14.6 7.2 V7.4 Q14.6 6.2 15.9 6.2 Q17.2 6.2 17.2 7.4 V8.4 Q17.2 7.4 18.5 7.4 Q19.8 7.4 19.8 8.8 L21.7 10.8 V15.8 L19.2 20.6 H13 L7.2 14.6 Z" fill="none" stroke="#000" stroke-width="1.15" stroke-linejoin="round"/><path d="M12 8.6 V12 M14.6 7.4 V12 M17.2 8.4 V12 M19.8 9 V12" stroke="#000" stroke-width="1.05"/><rect x="12.6" y="20" width="7" height="1.9" fill="#000"/><rect x="5.9" y="12.3" width="1.9" height="2.6" fill="#000"/></svg>
<div class="a" style="left:582px;top:590px;width:26px;height:26px;background:#b4b4b4;border-left:1px solid #dcdcdc;border-top:1px solid #dcdcdc;border-right:1px solid #5a5a5a;border-bottom:1px solid #5a5a5a"></div>
<svg style="left:582px;top:590px" width="26" height="26" viewBox="0 0 26 26"><rect x="7.6" y="8.8" width="12.2" height="9.6" fill="none" stroke="#000" stroke-width="1.15"/></svg>
<div class="a" style="left:608px;top:590px;width:26px;height:26px;background:#fff;border-left:1px solid #8a8a8a;border-top:1px solid #5a5a5a;border-right:1px solid #fff;border-bottom:1px solid #fff"></div>
<svg style="left:608px;top:590px" width="26" height="26" viewBox="0 0 26 26"><path d="M7.4 14.2 L14.6 7.3 L20 12.5 L12.6 19.8 Z" fill="none" stroke="#000" stroke-width="1"/></svg>
<div class="a" style="left:634px;top:590px;width:26px;height:26px;background:#b4b4b4;border-left:1px solid #dcdcdc;border-top:1px solid #dcdcdc;border-right:1px solid #5a5a5a;border-bottom:1px solid #5a5a5a"></div>
<svg style="left:634px;top:590px" width="26" height="26" viewBox="0 0 26 26"><path d="M13.2 8.4 Q8 9.5 8.2 13.4 Q8.6 18 13.4 18.2 Q17.8 18 18.8 13.6 L16.4 13.4 Q15.6 15.6 13.6 15.4 Q11.2 14.8 11.6 12 Q12 10.2 14.6 9.2 Z" fill="none" stroke="#000" stroke-width="1.15" stroke-linejoin="round"/></svg>
<div class="a" style="left:1239px;top:587px;width:85px;height:33px;background:#d6d6d6;border-top:1px solid #dedede;border-left:1px solid #dedede;border-right:1px solid #5a5a5a;border-bottom:1px solid #5a5a5a"></div>
<div class="a" style="left:1240px;top:588px;width:83px;height:31px;border-top:1px solid #5a5a5a;border-left:1px solid #5a5a5a"></div>
<div class="a" style="left:1242px;top:590px;width:26px;height:26px;background:#b4b4b4;border-left:1px solid #dcdcdc;border-top:1px solid #dcdcdc;border-right:1px solid #5a5a5a;border-bottom:1px solid #5a5a5a"></div>
<svg style="left:1242px;top:590px" width="26" height="26" viewBox="0 0 26 26"><circle cx="14.9" cy="11.8" r="5.3" fill="none" stroke="#000" stroke-width="1.3"/><path d="M10.6 15.6 L6.4 20.2" stroke="#000" stroke-width="2.4" stroke-linecap="butt"/><path d="M15.4 8.5 A3.7 3.7 0 0 1 18.4 11.8" fill="none" stroke="#00ffff" stroke-width="1.1"/><path d="M11.6 13.6 A3.9 3.9 0 0 0 13.6 15.4" fill="none" stroke="#00ffff" stroke-width="1.3"/></svg>
<div class="a" style="left:1268px;top:590px;width:26px;height:26px;background:#fff;border-left:1px solid #8a8a8a;border-top:1px solid #5a5a5a;border-right:1px solid #fff;border-bottom:1px solid #fff"></div>
<svg style="left:1268px;top:590px" width="26" height="26" viewBox="0 0 26 26"><path d="M9.1 5.8 L9.1 19 L12 16 L14.5 21.2 L17.1 20 L14.6 15 L18.6 14.8 Z" fill="#000"/><path d="M8.6 7 V18.4" stroke="#6a6a6a" stroke-width="0.8" stroke-dasharray="1 1"/></svg>
<div class="a" style="left:1294px;top:590px;width:26px;height:26px;background:#b4b4b4;border-left:1px solid #dcdcdc;border-top:1px solid #dcdcdc;border-right:1px solid #5a5a5a;border-bottom:1px solid #5a5a5a"></div>
<svg style="left:1294px;top:590px" width="26" height="26" viewBox="0 0 26 26"><path d="M7.2 13.6 L9.6 10.4 V8.6 Q9.6 7.4 10.8 7.4 Q12 7.4 12 8.6 V7.2 Q12 6 13.3 6 Q14.6 6 14.6 7.2 V7.4 Q14.6 6.2 15.9 6.2 Q17.2 6.2 17.2 7.4 V8.4 Q17.2 7.4 18.5 7.4 Q19.8 7.4 19.8 8.8 L21.7 10.8 V15.8 L19.2 20.6 H13 L7.2 14.6 Z" fill="none" stroke="#000" stroke-width="1.15" stroke-linejoin="round"/><path d="M12 8.6 V12 M14.6 7.4 V12 M17.2 8.4 V12 M19.8 9 V12" stroke="#000" stroke-width="1.05"/><rect x="12.6" y="20" width="7" height="1.9" fill="#000"/><rect x="5.9" y="12.3" width="1.9" height="2.6" fill="#000"/></svg>
<div class="a" style="left:9px;top:653.5px;width:1042px;height:307.5px;background:#fff"></div>
<div class="a" style="left:1051px;top:653.5px;width:2px;height:309px;background:#e6e6e6"></div>
<div class="a" style="left:10px;top:628.5px;width:346px;height:25.5px;background:#f0f0f0;border:1px solid #e6e6e6;border-bottom:1px solid #dcdcdc"></div>
<div class="a" style="left:705px;top:628.5px;width:346px;height:25.5px;background:#f0f0f0;border:1px solid #e6e6e6;border-bottom:1px solid #dcdcdc"></div>
<div class="a" style="left:356px;top:627px;width:350px;height:27px;background:#fff"></div>
<div class="t" style="left:19.7px;top:634.5px;font-size:12.5px;letter-spacing:-.35px;">基本数据</div>
<div class="t" style="left:364.7px;top:631.8px;font-size:12.5px;letter-spacing:-.35px;">相机参数</div>
<div class="t" style="left:714px;top:634.5px;font-size:12.5px;letter-spacing:-.35px;">其他参数</div>
<div class="a" style="left:0px;top:968px;width:1331px;height:2px;background:#a8a8a8"></div>
<div class="a" style="left:9px;top:961px;width:1042px;height:1.5px;background:#e8e8e8"></div>
<div class="t" style="left:14px;top:659.8px;font-size:12.5px;letter-spacing:-.35px;">相机参数</div>
<div class="t" style="left:280.7px;top:661.3px;font-size:12.5px;letter-spacing:-.35px;">图像参数</div>
<div class="t" style="left:760.3px;top:661.8px;font-size:12.5px;letter-spacing:-.35px;">识别字符</div>
<div class="a" style="left:13px;top:678px;width:267px;height:101px;background:#b4b4b4"></div>
<div class="a" style="left:279px;top:678px;width:1px;height:101px;background:#dcdcdc"></div>
<div class="a" style="left:13px;top:778px;width:267px;height:1px;background:#505050"></div>
<div class="a" style="left:278px;top:679px;width:1px;height:99px;background:#dcdcdc"></div>
<div class="a" style="left:14px;top:777px;width:265px;height:1px;background:#dcdcdc"></div>
<div class="a" style="left:277px;top:680px;width:1px;height:97px;background:#dcdcdc"></div>
<div class="a" style="left:15px;top:776px;width:263px;height:1px;background:#dcdcdc"></div>
<div class="a" style="left:276px;top:681px;width:1px;height:95px;background:#b4b4b4"></div>
<div class="a" style="left:16px;top:775px;width:261px;height:1px;background:#b4b4b4"></div>
<div class="a" style="left:275px;top:682px;width:1px;height:93px;background:#dcdcdc"></div>
<div class="a" style="left:17px;top:774px;width:259px;height:1px;background:#dcdcdc"></div>
<div class="a" style="left:13px;top:678px;width:267px;height:1px;background:#bcbcbc"></div>
<div class="a" style="left:13px;top:678px;width:1px;height:101px;background:#bcbcbc"></div>
<div class="a" style="left:14px;top:679px;width:265px;height:1px;background:#bcbcbc"></div>
<div class="a" style="left:14px;top:679px;width:1px;height:99px;background:#bcbcbc"></div>
<div class="a" style="left:15px;top:680px;width:263px;height:1px;background:#404040"></div>
<div class="a" style="left:15px;top:680px;width:1px;height:97px;background:#404040"></div>
<div class="a" style="left:16px;top:681px;width:261px;height:1px;background:#e0e0e0"></div>
<div class="a" style="left:16px;top:681px;width:1px;height:95px;background:#e0e0e0"></div>
<div class="a" style="left:17px;top:682px;width:259px;height:1px;background:#404040"></div>
<div class="a" style="left:17px;top:682px;width:1px;height:93px;background:#404040"></div>
<div class="t" style="left:18.5px;top:685.8px;font-size:12.5px;letter-spacing:-.35px;">相机列表</div>
<div class="t" style="left:158.5px;top:685.8px;font-size:12.5px;letter-spacing:-.35px;">曝光时间</div>
<div class="t" style="left:217.5px;top:685.8px;font-size:12.5px;letter-spacing:-.35px;">增益</div>
<div class="a" style="left:20px;top:704px;width:136px;height:24px;border:2px solid #8e8e8e;border-right-color:#c8c8c8;border-bottom-color:#c8c8c8;background:#b4b4b4"></div>
<div class="a" style="left:32px;top:708px;width:105px;height:19px;background:#fff"></div>
<svg style="left:21px;top:707px" width="11" height="20" viewBox="0 0 11 20"><path d="M2 2.5 H5 M3.5 2.5 V8 M2 8 H5" stroke="#000" stroke-width="1" fill="none"/><path d="M1.5 14 L9 5" stroke="#000" stroke-width="1"/><ellipse cx="7.3" cy="15" rx="1.7" ry="2.6" fill="none" stroke="#000" stroke-width="1"/></svg>
<div class="t" style="left:33px;top:709.5px;font-size:13px;">cam1</div>
<div class="a" style="left:138px;top:709px;width:16px;height:17px;background:#b4b4b4;border:1px solid #e0e0e0;border-right-color:#5a5a5a;border-bottom-color:#5a5a5a"></div>
<svg style="left:138px;top:709px" width="16" height="17" viewBox="0 0 16 17"><path d="M4.5 7 L11.5 7 L8 10.6 Z" fill="#000"/></svg>
<div class="a" style="left:158px;top:703px;width:59px;height:23px;background:#fff;border-right:1px solid #808080;border-bottom:1px solid #808080"></div>
<svg style="left:158.8px;top:704px" width="7" height="20" viewBox="0 0 7 20"><rect x="0" y="0" width="5.6" height="8.4" fill="#e2e2e2"/><rect x="0" y="11.6" width="5.6" height="8.4" fill="#e2e2e2"/><path d="M0 8.4 H6 M0 19.5 H6" stroke="#6a6a6a" stroke-width="1"/><path d="M5.9 0 V8.4 M5.9 11.6 V20" stroke="#8a8a8a" stroke-width="0.8"/><path d="M0.2 6.6 L2.8 1.8 L5.4 6.6 Z" fill="#000"/><path d="M0.2 13.2 L2.8 18 L5.4 13.2 Z" fill="#000"/></svg>
<div class="a" style="left:167px;top:705.5px;width:47px;height:17.5px;border-top:1px solid #5a5a5a;border-left:1px solid #5a5a5a"></div>
<div class="t" style="left:169.2px;top:707px;font-size:13px;">3000</div>
<div class="a" style="left:217.5px;top:703px;width:58.3px;height:23px;background:#fff;border-right:1px solid #808080;border-bottom:1px solid #808080"></div>
<svg style="left:218.3px;top:704px" width="7" height="20" viewBox="0 0 7 20"><rect x="0" y="0" width="5.6" height="8.4" fill="#e2e2e2"/><rect x="0" y="11.6" width="5.6" height="8.4" fill="#e2e2e2"/><path d="M0 8.4 H6 M0 19.5 H6" stroke="#6a6a6a" stroke-width="1"/><path d="M5.9 0 V8.4 M5.9 11.6 V20" stroke="#8a8a8a" stroke-width="0.8"/><path d="M0.2 6.6 L2.8 1.8 L5.4 6.6 Z" fill="#000"/><path d="M0.2 13.2 L2.8 18 L5.4 13.2 Z" fill="#000"/></svg>
<div class="a" style="left:226.5px;top:705.5px;width:46.3px;height:17.5px;border-top:1px solid #5a5a5a;border-left:1px solid #5a5a5a"></div>
<div class="t" style="left:228.7px;top:707px;font-size:13px;">10</div>
<div class="t" style="left:22px;top:733.6px;font-size:12.5px;letter-spacing:-.35px;">触发</div>
<div class="t" style="left:78px;top:733.6px;font-size:12.5px;letter-spacing:-.35px;">超时</div>
<div class="t" style="left:135px;top:733.6px;font-size:12.5px;letter-spacing:-.35px;">输出线路</div>
<div class="t" style="left:218px;top:733.6px;font-size:12.5px;letter-spacing:-.35px;">输出脉宽</div>
<div class="a" style="left:21.5px;top:751.5px;width:54.5px;height:21.5px;background:#fff"></div>
<div class="dd" style="left:58.5px;top:753px;width:16.5px;height:18.5px"></div>
<svg style="left:58.5px;top:753px" width="16.5" height="18.5" viewBox="0 0 16.5 18.5"><path d="M4.25 7.65 L8.25 11.65 L12.25 7.65" fill="none" stroke="#444" stroke-width="1.1"/></svg>
<div class="t" style="left:25px;top:754.55px;font-size:12.5px;letter-spacing:-.35px;">关</div>
<div class="a" style="left:77px;top:751px;width:58px;height:23px;background:#fff;border-right:1px solid #808080;border-bottom:1px solid #808080"></div>
<svg style="left:77.8px;top:752px" width="7" height="20" viewBox="0 0 7 20"><rect x="0" y="0" width="5.6" height="8.4" fill="#e2e2e2"/><rect x="0" y="11.6" width="5.6" height="8.4" fill="#e2e2e2"/><path d="M0 8.4 H6 M0 19.5 H6" stroke="#6a6a6a" stroke-width="1"/><path d="M5.9 0 V8.4 M5.9 11.6 V20" stroke="#8a8a8a" stroke-width="0.8"/><path d="M0.2 6.6 L2.8 1.8 L5.4 6.6 Z" fill="#000"/><path d="M0.2 13.2 L2.8 18 L5.4 13.2 Z" fill="#000"/></svg>
<div class="a" style="left:86px;top:753.5px;width:46px;height:17.5px;border-top:1px solid #5a5a5a;border-left:1px solid #5a5a5a"></div>
<div class="t" style="left:88.2px;top:755px;font-size:13px;">200</div>
<div class="a" style="left:135px;top:751.5px;width:80.5px;height:21.5px;background:#fff"></div>
<div class="dd" style="left:198px;top:753px;width:16.5px;height:18.5px"></div>
<svg style="left:198px;top:753px" width="16.5" height="18.5" viewBox="0 0 16.5 18.5"><path d="M4.25 7.65 L8.25 11.65 L12.25 7.65" fill="none" stroke="#444" stroke-width="1.1"/></svg>
<div class="t" style="left:137.5px;top:755.25px;font-size:13px;letter-spacing:-.3px">Line1</div>
<div class="a" style="left:217px;top:751px;width:58.8px;height:23px;background:#fff;border-right:1px solid #808080;border-bottom:1px solid #808080"></div>
<svg style="left:217.8px;top:752px" width="7" height="20" viewBox="0 0 7 20"><rect x="0" y="0" width="5.6" height="8.4" fill="#e2e2e2"/><rect x="0" y="11.6" width="5.6" height="8.4" fill="#e2e2e2"/><path d="M0 8.4 H6 M0 19.5 H6" stroke="#6a6a6a" stroke-width="1"/><path d="M5.9 0 V8.4 M5.9 11.6 V20" stroke="#8a8a8a" stroke-width="0.8"/><path d="M0.2 6.6 L2.8 1.8 L5.4 6.6 Z" fill="#000"/><path d="M0.2 13.2 L2.8 18 L5.4 13.2 Z" fill="#000"/></svg>
<div class="a" style="left:226px;top:753.5px;width:46.8px;height:17.5px;border-top:1px solid #5a5a5a;border-left:1px solid #5a5a5a"></div>
<div class="t" style="left:228.2px;top:755px;font-size:13px;">100</div>
<div class="btn" style="left:14px;top:784px">单帧采集</div>
<div class="btn" style="left:103px;top:784px">定义ROI</div>
<div class="btn" style="left:192px;top:784px">输出脉冲</div>
<div class="btn" style="left:14px;top:831px">连续采集</div>
<div class="btn" style="left:103px;top:831px">保存模型</div>
<div class="btn" style="left:192px;top:831px">获取模型参数</div>
<div class="btn" style="left:14px;top:878px">打开图像</div>
<div class="btn" style="left:103px;top:878px">图像分析</div>
<div class="t" style="left:191.5px;top:882.8px;font-size:12.5px;letter-spacing:-.35px;">耗时ms</div>
<div class="a" style="left:191px;top:900px;width:83px;height:24px;background:#f0f0f0;border:1px solid #adadad"></div>
<div class="t" style="left:195.5px;top:904px;font-size:13px;">330.69</div>
<div class="t" style="left:5px;top:913.3px;font-size:21px;font-weight:bold;color:#0000ff;line-height:30px;letter-spacing:.2px">石鑫华视觉论坛</div>
<div class="t" style="left:5px;top:942.4px;font-size:22.1px;font-weight:bold;color:#0000ff;line-height:30px;letter-spacing:-.08px">visionbbs.com</div>
<div class="a" style="left:280px;top:678px;width:478px;height:276px;background:#b4b4b4"></div>
<div class="a" style="left:757px;top:678px;width:1px;height:276px;background:#505050"></div>
<div class="a" style="left:280px;top:953px;width:478px;height:1px;background:#505050"></div>
<div class="a" style="left:756px;top:679px;width:1px;height:274px;background:#dcdcdc"></div>
<div class="a" style="left:281px;top:952px;width:476px;height:1px;background:#dcdcdc"></div>
<div class="a" style="left:755px;top:680px;width:1px;height:272px;background:#dcdcdc"></div>
<div class="a" style="left:282px;top:951px;width:474px;height:1px;background:#dcdcdc"></div>
<div class="a" style="left:754px;top:681px;width:1px;height:270px;background:#b4b4b4"></div>
<div class="a" style="left:283px;top:950px;width:472px;height:1px;background:#b4b4b4"></div>
<div class="a" style="left:753px;top:682px;width:1px;height:268px;background:#dcdcdc"></div>
<div class="a" style="left:284px;top:949px;width:470px;height:1px;background:#dcdcdc"></div>
<div class="a" style="left:280px;top:678px;width:478px;height:1px;background:#bcbcbc"></div>
<div class="a" style="left:280px;top:678px;width:1px;height:276px;background:#bcbcbc"></div>
<div class="a" style="left:281px;top:679px;width:476px;height:1px;background:#bcbcbc"></div>
<div class="a" style="left:281px;top:679px;width:1px;height:274px;background:#bcbcbc"></div>
<div class="a" style="left:282px;top:680px;width:474px;height:1px;background:#404040"></div>
<div class="a" style="left:282px;top:680px;width:1px;height:272px;background:#404040"></div>
<div class="a" style="left:283px;top:681px;width:472px;height:1px;background:#e0e0e0"></div>
<div class="a" style="left:283px;top:681px;width:1px;height:270px;background:#e0e0e0"></div>
<div class="a" style="left:284px;top:682px;width:470px;height:1px;background:#404040"></div>
<div class="a" style="left:284px;top:682px;width:1px;height:268px;background:#404040"></div>
<div class="t" style="left:285.8px;top:684.5px;font-size:13px;letter-spacing:.3px">ROI</div>
<div class="t" style="left:464.3px;top:685.3px;font-size:12.5px;letter-spacing:-.35px;">深度OCR参数</div>
<div class="a" style="left:285px;top:704px;width:179px;height:244px;background:#b4b4b4;border-style:solid;border-width:4px;border-color:#9c9c9c #c6c6c6 #c6c6c6 #9c9c9c"></div>
<div class="a" style="left:289px;top:708px;width:171px;height:236px;background:#b4b4b4;border-style:solid;border-width:0px;border-color:#9c9c9c #c6c6c6 #c6c6c6 #9c9c9c"></div>
<div class="t" style="left:331px;top:709.5px;font-size:13px;">Global Rectangle</div>
<svg style="left:289px;top:723.5px" width="14.6" height="29" viewBox="0 0 14.6 29"><defs><linearGradient id="sp3613" x1="0" y1="0" x2="1" y2="0.6"><stop offset="0" stop-color="#ececec"/><stop offset="0.5" stop-color="#c8c8c8"/><stop offset="1" stop-color="#7c7c7c"/></linearGradient></defs><ellipse cx="7.3" cy="14.5" rx="6.3" ry="13.5" fill="url(#sp3613)" stroke="#8e8e8e" stroke-width="0.7"/><path d="M1.6 14.1 H13" stroke="#909090" stroke-width="0.9"/><path d="M1.6 15 H13" stroke="#e8e8e8" stroke-width="0.8"/><path d="M5 11.1 L7.3 6.5 L9.6 11.1 Z" fill="none" stroke="#2a2a2a" stroke-width="0.9"/><path d="M5 17.9 L7.3 22.5 L9.6 17.9 Z" fill="none" stroke="#2a2a2a" stroke-width="0.9"/></svg>
<div class="a" style="left:303px;top:728px;width:26.5px;height:25px;background:#b4b4b4;border-style:solid;border-width:3px;border-color:#9c9c9c #c6c6c6 #c6c6c6 #9c9c9c"></div>
<div class="a" style="left:306px;top:731px;width:20.5px;height:19px;background:#fff"></div>
<div class="t" style="left:309px;top:732.5px;font-size:13px;">0</div>
<div class="a" style="left:330.5px;top:728px;width:72.5px;height:34.5px;background:#b4b4b4;border-style:solid;border-width:4px;border-color:#9c9c9c #c6c6c6 #c6c6c6 #9c9c9c"></div>
<svg style="left:334px;top:730.5px" width="14.6" height="29" viewBox="0 0 14.6 29" opacity="0.5"><defs><linearGradient id="sp4070" x1="0" y1="0" x2="1" y2="0.6"><stop offset="0" stop-color="#ececec"/><stop offset="0.5" stop-color="#c8c8c8"/><stop offset="1" stop-color="#7c7c7c"/></linearGradient></defs><ellipse cx="7.3" cy="14.5" rx="6.3" ry="13.5" fill="url(#sp4070)" stroke="#8e8e8e" stroke-width="0.7"/><path d="M1.6 14.1 H13" stroke="#909090" stroke-width="0.9"/><path d="M1.6 15 H13" stroke="#e8e8e8" stroke-width="0.8"/><path d="M5 11.1 L7.3 6.5 L9.6 11.1 Z" fill="none" stroke="#2a2a2a" stroke-width="0.9"/><path d="M5 17.9 L7.3 22.5 L9.6 17.9 Z" fill="none" stroke="#2a2a2a" stroke-width="0.9"/></svg>
<div class="a" style="left:347px;top:733.5px;width:50.5px;height:23px;background:#b4b4b4;border-style:solid;border-width:2px;border-color:#9c9c9c #c6c6c6 #c6c6c6 #9c9c9c"></div>
<div class="a" style="left:349px;top:735.5px;width:46.5px;height:19px;background:#d2d2d2"></div>
<div class="t" style="left:352px;top:737px;font-size:13px;color:#8c8c8c">0</div>
<div class="t" style="left:331px;top:765px;font-size:13px;">Contours</div>
<svg style="left:289px;top:779px" width="14.6" height="29" viewBox="0 0 14.6 29"><defs><linearGradient id="sp3669" x1="0" y1="0" x2="1" y2="0.6"><stop offset="0" stop-color="#ececec"/><stop offset="0.5" stop-color="#c8c8c8"/><stop offset="1" stop-color="#7c7c7c"/></linearGradient></defs><ellipse cx="7.3" cy="14.5" rx="6.3" ry="13.5" fill="url(#sp3669)" stroke="#8e8e8e" stroke-width="0.7"/><path d="M1.6 14.1 H13" stroke="#909090" stroke-width="0.9"/><path d="M1.6 15 H13" stroke="#e8e8e8" stroke-width="0.8"/><path d="M5 11.1 L7.3 6.5 L9.6 11.1 Z" fill="none" stroke="#2a2a2a" stroke-width="0.9"/><path d="M5 17.9 L7.3 22.5 L9.6 17.9 Z" fill="none" stroke="#2a2a2a" stroke-width="0.9"/></svg>
<div class="a" style="left:303px;top:783px;width:26.5px;height:25px;background:#b4b4b4;border-style:solid;border-width:3px;border-color:#9c9c9c #c6c6c6 #c6c6c6 #9c9c9c"></div>
<div class="a" style="left:306px;top:786px;width:20.5px;height:19px;background:#fff"></div>
<div class="t" style="left:309px;top:787.5px;font-size:13px;">0</div>
<div class="a" style="left:330.5px;top:782.5px;width:130px;height:161px;background:#b4b4b4;border-style:solid;border-width:7px;border-color:#9c9c9c #c6c6c6 #c6c6c6 #9c9c9c"></div>
<div class="t g" style="left:350px;top:792px;font-size:13px;">Contour Type</div>
<svg style="left:338px;top:808.5px" width="14.6" height="29" viewBox="0 0 14.6 29" opacity="0.5"><defs><linearGradient id="sp4188" x1="0" y1="0" x2="1" y2="0.6"><stop offset="0" stop-color="#ececec"/><stop offset="0.5" stop-color="#c8c8c8"/><stop offset="1" stop-color="#7c7c7c"/></linearGradient></defs><ellipse cx="7.3" cy="14.5" rx="6.3" ry="13.5" fill="url(#sp4188)" stroke="#8e8e8e" stroke-width="0.7"/><path d="M1.6 14.1 H13" stroke="#909090" stroke-width="0.9"/><path d="M1.6 15 H13" stroke="#e8e8e8" stroke-width="0.8"/><path d="M5 11.1 L7.3 6.5 L9.6 11.1 Z" fill="none" stroke="#2a2a2a" stroke-width="0.9"/><path d="M5 17.9 L7.3 22.5 L9.6 17.9 Z" fill="none" stroke="#2a2a2a" stroke-width="0.9"/></svg>
<div class="a" style="left:353px;top:812.5px;width:46.5px;height:20px;background:#d2d2d2"></div>
<div class="a" style="left:351px;top:810.5px;width:50.5px;height:24px;background:#d2d2d2;border-style:solid;border-width:2px;border-color:#9c9c9c #c6c6c6 #c6c6c6 #9c9c9c"></div>
<div class="t g" style="left:356px;top:814.5px;font-size:13px;">0</div>
<div class="t g" style="left:350px;top:838px;font-size:13px;">ROI Type</div>
<svg style="left:338px;top:854.5px" width="14.6" height="29" viewBox="0 0 14.6 29" opacity="0.5"><defs><linearGradient id="sp4234" x1="0" y1="0" x2="1" y2="0.6"><stop offset="0" stop-color="#ececec"/><stop offset="0.5" stop-color="#c8c8c8"/><stop offset="1" stop-color="#7c7c7c"/></linearGradient></defs><ellipse cx="7.3" cy="14.5" rx="6.3" ry="13.5" fill="url(#sp4234)" stroke="#8e8e8e" stroke-width="0.7"/><path d="M1.6 14.1 H13" stroke="#909090" stroke-width="0.9"/><path d="M1.6 15 H13" stroke="#e8e8e8" stroke-width="0.8"/><path d="M5 11.1 L7.3 6.5 L9.6 11.1 Z" fill="none" stroke="#2a2a2a" stroke-width="0.9"/><path d="M5 17.9 L7.3 22.5 L9.6 17.9 Z" fill="none" stroke="#2a2a2a" stroke-width="0.9"/></svg>
<div class="a" style="left:351px;top:857px;width:50.5px;height:23px;background:#d2d2d2;border-style:solid;border-width:2px;border-color:#9c9c9c #c6c6c6 #c6c6c6 #9c9c9c"></div>
<div class="t g" style="left:356px;top:860.5px;font-size:13px;">0</div>
<div class="t g" style="left:381px;top:884px;font-size:13px;">Points</div>
<svg style="left:339px;top:898.5px" width="14.6" height="29" viewBox="0 0 14.6 29" opacity="0.5"><defs><linearGradient id="sp4288" x1="0" y1="0" x2="1" y2="0.6"><stop offset="0" stop-color="#ececec"/><stop offset="0.5" stop-color="#c8c8c8"/><stop offset="1" stop-color="#7c7c7c"/></linearGradient></defs><ellipse cx="7.3" cy="14.5" rx="6.3" ry="13.5" fill="url(#sp4288)" stroke="#8e8e8e" stroke-width="0.7"/><path d="M1.6 14.1 H13" stroke="#909090" stroke-width="0.9"/><path d="M1.6 15 H13" stroke="#e8e8e8" stroke-width="0.8"/><path d="M5 11.1 L7.3 6.5 L9.6 11.1 Z" fill="none" stroke="#2a2a2a" stroke-width="0.9"/><path d="M5 17.9 L7.3 22.5 L9.6 17.9 Z" fill="none" stroke="#2a2a2a" stroke-width="0.9"/></svg>
<div class="a" style="left:353px;top:903px;width:24.5px;height:23px;background:#d2d2d2;border-style:solid;border-width:2px;border-color:#9c9c9c #c6c6c6 #c6c6c6 #9c9c9c"></div>
<div class="t g" style="left:357.5px;top:906px;font-size:13px;">0</div>
<div class="a" style="left:379px;top:902px;width:73.5px;height:34.5px;background:#b4b4b4;border-style:solid;border-width:4px;border-color:#9c9c9c #c6c6c6 #c6c6c6 #9c9c9c"></div>
<svg style="left:383px;top:905.5px" width="14.6" height="29" viewBox="0 0 14.6 29" opacity="0.5"><defs><linearGradient id="sp4735" x1="0" y1="0" x2="1" y2="0.6"><stop offset="0" stop-color="#ececec"/><stop offset="0.5" stop-color="#c8c8c8"/><stop offset="1" stop-color="#7c7c7c"/></linearGradient></defs><ellipse cx="7.3" cy="14.5" rx="6.3" ry="13.5" fill="url(#sp4735)" stroke="#8e8e8e" stroke-width="0.7"/><path d="M1.6 14.1 H13" stroke="#909090" stroke-width="0.9"/><path d="M1.6 15 H13" stroke="#e8e8e8" stroke-width="0.8"/><path d="M5 11.1 L7.3 6.5 L9.6 11.1 Z" fill="none" stroke="#2a2a2a" stroke-width="0.9"/><path d="M5 17.9 L7.3 22.5 L9.6 17.9 Z" fill="none" stroke="#2a2a2a" stroke-width="0.9"/></svg>
<div class="a" style="left:396px;top:908px;width:50.5px;height:23px;background:#c6c6c6;border-style:solid;border-width:2px;border-color:#9c9c9c #c6c6c6 #c6c6c6 #9c9c9c"></div>
<div class="t" style="left:401px;top:911.5px;font-size:13px;color:#9a9a9a">0</div>
<div class="a" style="left:463px;top:703.5px;width:290px;height:230px;background:#b4b4b4;border-style:solid;border-width:4.5px;border-color:#9c9c9c #c6c6c6 #c6c6c6 #9c9c9c"></div>
<div class="t" style="left:469px;top:711.3px;font-size:12.5px;letter-spacing:-.35px;">模型文件</div>
<div class="a" style="left:469px;top:729px;width:241.8px;height:22px;background:#fff"></div>
<div class="t" style="left:472px;top:731.5px;font-size:13px;letter-spacing:-.3px">D:\我的文档\教程\LabVIEW</div>
<div class="a" style="left:715.8px;top:730px;width:29.3px;height:15.3px;background:#e1e1e1"></div>
<svg style="left:715.5px;top:730px" width="30" height="16" viewBox="0 0 30 16"><path d="M6.9 13.3 V3.7 L8.5 2.1 H11.6 L12.9 4.4 H20.3 V7.4 H10.4 Z" fill="#ffff00" stroke="#000" stroke-width="1" stroke-linejoin="round"/><path d="M10.3 7.5 H24.2 L20.5 13.4 H6.9 Z" fill="#696969" stroke="#000" stroke-width="1" stroke-linejoin="round"/></svg>
<div class="t" style="left:469px;top:754.8px;font-size:12.5px;letter-spacing:-.35px;">模型</div>
<div class="t" style="left:569px;top:754.8px;font-size:12.5px;letter-spacing:-.35px;">覆盖</div>
<div class="t" style="left:596px;top:754.8px;font-size:12.5px;letter-spacing:-.35px;">颜色</div>
<div class="t" style="left:623px;top:754.8px;font-size:12.5px;letter-spacing:-.35px;">字号</div>
<div class="t" style="left:668.5px;top:754.8px;font-size:12.5px;letter-spacing:-.35px;letter-spacing:-.05px">环形ROI基线</div>
<div class="a" style="left:469px;top:772px;width:98px;height:20.5px;background:#fff"></div>
<div class="dd" style="left:549.5px;top:773.5px;width:16.5px;height:17.5px"></div>
<svg style="left:549.5px;top:773.5px" width="16.5" height="17.5" viewBox="0 0 16.5 17.5"><path d="M4.25 7.15 L8.25 11.15 L12.25 7.15" fill="none" stroke="#444" stroke-width="1.1"/></svg>
<div class="t" style="left:471px;top:774.55px;font-size:12.5px;letter-spacing:-.35px;">自动</div>
<div class="a" style="left:568px;top:772px;width:12.5px;height:12.5px;background:#fff;border:1px solid #333"></div>
<svg style="left:568px;top:772px" width="13" height="13" viewBox="0 0 13 13"><path d="M2.8 6.4 L5.4 9.2 L10.4 3.2" fill="none" stroke="#222" stroke-width="1.1"/></svg>
<div class="a" style="left:596.5px;top:773.5px;width:24.5px;height:24px;background:#b4b4b4;border:1px solid #dcdcdc;border-right-color:#5a5a5a;border-bottom-color:#5a5a5a"></div>
<div class="a" style="left:599px;top:776px;width:19px;height:19.5px;background:#64ff00;border:1px solid #5a5a5a;border-right-color:#9adf6a;border-bottom-color:#9adf6a"></div>
<div class="a" style="left:623px;top:774px;width:43.5px;height:21.5px;background:#fff"></div>
<div class="t" style="left:626px;top:777px;font-size:13px;">40</div>
<div class="a" style="left:652.5px;top:775.5px;width:12.5px;height:18.5px;background:#f0f0f0;border:1px solid #dcdcdc"></div>
<svg style="left:652.5px;top:775.5px" width="13" height="19" viewBox="0 0 13 19"><path d="M3.6 6.6 L6.4 3.6 L9.2 6.6 Z M3.6 12 L6.4 15 L9.2 12 Z" fill="#000"/><path d="M1 9.3 H12" stroke="#dcdcdc" stroke-width="1"/></svg>
<div class="a" style="left:669px;top:774px;width:74.5px;height:21px;background:#fff"></div>
<div class="dd" style="left:726px;top:775.5px;width:16.5px;height:18px"></div>
<svg style="left:726px;top:775.5px" width="16.5" height="18" viewBox="0 0 16.5 18"><path d="M4.25 7.4 L8.25 11.4 L12.25 7.4" fill="none" stroke="#444" stroke-width="1.1"/></svg>
<div class="t" style="left:671.5px;top:776.8px;font-size:12.5px;letter-spacing:-.35px;">基线在内</div>
<div class="t" style="left:469px;top:796.8px;font-size:12.5px;letter-spacing:-.35px;">参数</div>
<svg style="left:468px;top:814px" width="14.6" height="29" viewBox="0 0 14.6 29"><defs><linearGradient id="sp5494" x1="0" y1="0" x2="1" y2="0.6"><stop offset="0" stop-color="#ececec"/><stop offset="0.5" stop-color="#c8c8c8"/><stop offset="1" stop-color="#7c7c7c"/></linearGradient></defs><ellipse cx="7.3" cy="14.5" rx="6.3" ry="13.5" fill="url(#sp5494)" stroke="#8e8e8e" stroke-width="0.7"/><path d="M1.6 14.1 H13" stroke="#909090" stroke-width="0.9"/><path d="M1.6 15 H13" stroke="#e8e8e8" stroke-width="0.8"/><path d="M5 11.1 L7.3 6.5 L9.6 11.1 Z" fill="none" stroke="#2a2a2a" stroke-width="0.9"/><path d="M5 17.9 L7.3 22.5 L9.6 17.9 Z" fill="none" stroke="#2a2a2a" stroke-width="0.9"/></svg>
<div class="a" style="left:482px;top:818px;width:26px;height:24.5px;background:#b4b4b4;border-style:solid;border-width:3px;border-color:#9c9c9c #c6c6c6 #c6c6c6 #9c9c9c"></div>
<div class="a" style="left:485px;top:821px;width:20px;height:18.5px;background:#fff"></div>
<div class="t" style="left:488px;top:822.5px;font-size:13px;">0</div>
<div class="a" style="left:509px;top:818px;width:240px;height:110.5px;background:#b4b4b4;border-style:solid;border-width:7px;border-color:#9c9c9c #c6c6c6 #c6c6c6 #9c9c9c"></div>
<div class="t" style="left:518.5px;top:827.3px;font-size:12.5px;letter-spacing:-.35px;">参数名称</div>
<div class="a" style="left:518px;top:846px;width:222px;height:24.5px;background:#fff"></div>
<div class="dd" style="left:723px;top:847.5px;width:16px;height:21.5px"></div>
<svg style="left:723px;top:847.5px" width="16" height="21.5" viewBox="0 0 16 21.5"><path d="M4 9.15 L8 13.15 L12 9.15" fill="none" stroke="#444" stroke-width="1.1"/></svg>
<div class="t" style="left:522.5px;top:850.05px;font-size:13px;">runtime</div>
<div class="a" style="left:518px;top:870px;width:203px;height:2.3px;background:#fff"></div>
<div class="t" style="left:518.5px;top:875.3px;font-size:12.5px;letter-spacing:-.35px;">参数值</div>
<div class="t" style="left:655px;top:875.3px;font-size:12.5px;letter-spacing:-.35px;">参数值类型</div>
<div class="a" style="left:518px;top:894px;width:133.5px;height:24.8px;background:#fff"></div>
<div class="dd" style="left:635px;top:895.5px;width:15.5px;height:21.8px"></div>
<svg style="left:635px;top:895.5px" width="15.5" height="21.8" viewBox="0 0 15.5 21.8"><path d="M3.75 9.3 L7.75 13.3 L11.75 9.3" fill="none" stroke="#444" stroke-width="1.1"/></svg>
<div class="t" style="left:522.2px;top:897.1px;font-size:13px;">gpu</div>
<div class="a" style="left:518px;top:918px;width:115px;height:2.6px;background:#fff"></div>
<div class="a" style="left:654.3px;top:894px;width:85.5px;height:24.8px;background:#fff"></div>
<div class="dd" style="left:722.3px;top:895.5px;width:16.5px;height:21.8px"></div>
<svg style="left:722.3px;top:895.5px" width="16.5" height="21.8" viewBox="0 0 16.5 21.8"><path d="M4.25 9.3 L8.25 13.3 L12.25 9.3" fill="none" stroke="#444" stroke-width="1.1"/></svg>
<div class="t" style="left:657.3px;top:896.8px;font-size:12.5px;letter-spacing:-.35px;">字符串</div>
<div class="a" style="left:759px;top:679px;width:288.5px;height:279px;background:#f0f0f0;border:1px solid #c8c8c8;border-right:2px solid #5a5a5a;border-bottom:2px solid #5a5a5a"></div>
<div class="a" style="left:760px;top:680px;width:4px;height:276px;background:linear-gradient(90deg,#d0d0d0,#8c8c8c)"></div>
<div class="a" style="left:760px;top:680px;width:285.5px;height:3px;background:linear-gradient(180deg,#d0d0d0,#8c8c8c)"></div>
<div class="a" style="left:763px;top:682px;width:265px;height:272.5px;background:#f6f6f6;border-left:1px solid #8c8c8c;border-right:2px solid #8c8c8c;border-bottom:1px solid #8c8c8c"></div>
<div class="a" style="left:764px;top:724.5px;width:263px;height:1.6px;background:#8a8a8a"></div>
<div class="a" style="left:764px;top:745.5px;width:263px;height:1.6px;background:#8a8a8a"></div>
<div class="a" style="left:764px;top:766.5px;width:263px;height:1.6px;background:#8a8a8a"></div>
<div class="a" style="left:764px;top:787.5px;width:263px;height:1.6px;background:#8a8a8a"></div>
<div class="a" style="left:764px;top:808.5px;width:263px;height:1.6px;background:#8a8a8a"></div>
<div class="a" style="left:764px;top:829.5px;width:263px;height:1.6px;background:#8a8a8a"></div>
<div class="a" style="left:764px;top:850.5px;width:263px;height:1.6px;background:#8a8a8a"></div>
<div class="a" style="left:764px;top:871.5px;width:263px;height:1.6px;background:#8a8a8a"></div>
<div class="a" style="left:764px;top:892.5px;width:263px;height:1.6px;background:#8a8a8a"></div>
<div class="a" style="left:764px;top:913.5px;width:263px;height:1.6px;background:#8a8a8a"></div>
<div class="a" style="left:764px;top:934.5px;width:263px;height:1.6px;background:#8a8a8a"></div>
<div class="a" style="left:763px;top:682px;width:265px;height:22px;background:#fff;border:1px solid #000;border-bottom-width:2px"></div>
<div class="a" style="left:763px;top:703px;width:265px;height:21.5px;background:#fff;border:1px solid #000;border-top-width:1px"></div>
<div class="t" style="left:766px;top:685px;font-size:13px;">AT02</div>
<div class="t" style="left:766px;top:706px;font-size:13px;">1101</div>
<div class="a sb" style="left:1029px;top:683px;width:16.5px;height:272px;"></div>
<svg style="left:1030px;top:683px" width="17" height="272" viewBox="1030 683 17 272"><path d="M1033 693.5 L1036.5 689.7 L1040 693.5" fill="none" stroke="#5c5c5c" stroke-width="1.9"/><path d="M1033 945 L1036.5 948.8 L1040 945" fill="none" stroke="#5c5c5c" stroke-width="1.9"/></svg>
<div class="a" style="left:1056px;top:626px;width:267.7px;height:337.5px;background:#fff;border:1px solid #828790"></div>
<div class="t" style="left:1063px;top:630px;font-size:12.001px;">初始化程序<span class="ls">,2024-12-20 08:19:08</span></div>
<div class="t" style="left:1063px;top:648px;font-size:12.001px;">初始化控件<span class="ls">,2024-12-20 08:19:08</span></div>
<div class="t" style="left:1063px;top:666px;font-size:12.001px;">加载机种参数<span class="ls">,2024-12-20 08:19:08</span></div>
<div class="t" style="left:1063px;top:684px;font-size:12.001px;">初始化机种参数<span class="ls">,2024-12-20 08:19:08</span></div>
<div class="t" style="left:1063px;top:702px;font-size:12.001px;">设置参数<span class="ls">,2024-12-20 08:19:10</span></div>
<div class="t" style="left:1063px;top:720px;font-size:12.001px;">打开图像<span class="ls">,2024-12-20 08:19:12</span></div>
<div class="t" style="left:1063px;top:738px;font-size:12.001px;">图像分析耗时<span class="ls">240.8ms,2024-12-20 08:19:18</span></div>
<div class="t" style="left:1063px;top:756px;font-size:12.001px;">图像分析耗时<span class="ls">22.3ms,2024-12-20 08:19:23</span></div>
<div class="t" style="left:1063px;top:774px;font-size:12.001px;">定义兴趣区域<span class="ls">OCR,2024-12-20 08:19:28</span></div>
<div class="t" style="left:1063px;top:792px;font-size:12.001px;">图像分析耗时<span class="ls">25.0ms,2024-12-20 08:19:29</span></div>
<div class="t" style="left:1063px;top:810px;font-size:12.001px;">切换深度<span class="ls">OCR<span style="letter-spacing:0">模型</span>,2024-12-20 08:19:34</span></div>
<div class="t" style="left:1063px;top:828px;font-size:12.001px;">定义全图<span class="ls">OCR,2024-12-20 08:19:37</span></div>
<div class="a" style="left:1060px;top:844px;width:245px;height:17.5px;background:#0078d7"></div>
<div class="t" style="left:1063px;top:846px;font-size:12.001px;color:#fff">图像分析耗时<span class="ls">330.7ms,2024-12-20 08:19:38</span></div>
<div class="a" style="left:1330px;top:630px;width:1px;height:332px;background:#5a76ae;opacity:.6"></div>
</body></html>
